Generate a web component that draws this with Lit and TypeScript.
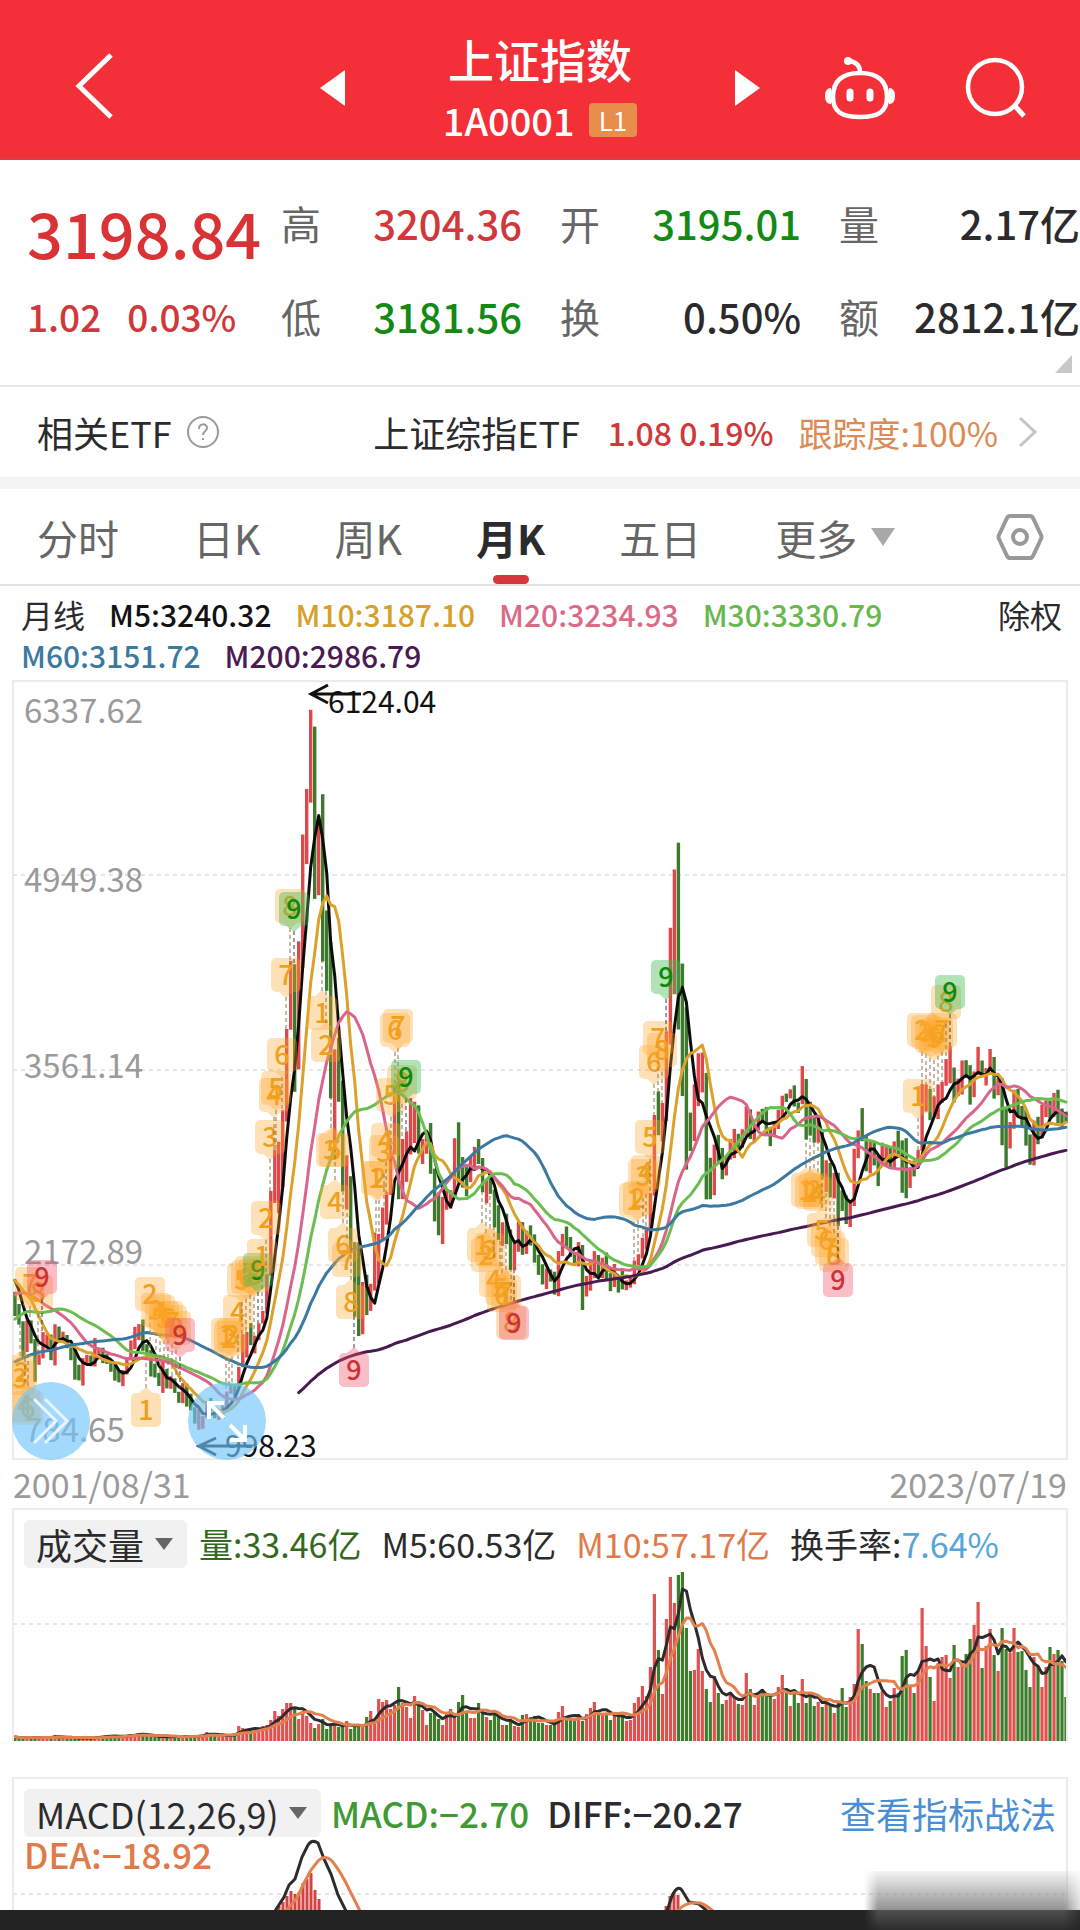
import { LitElement, html, svg, css } from "lit";
import { customElement } from "lit/decorators.js";

const nums = (s: string) => s.trim().split(/\s+/).map(Number);

// Monthly closes, December 1990 to July 2023.
const CLOSES = nums(`127.61
129.97 133.01 120.19 113.94 114.83 137.56 143.8 178.43 180.92 218.6 259.6 292.75
313.24 364.66 381.24 445.38 1234.71 1191.19 1052.07 823.27 702.32 507.25 724.6 780.39
1198.48 1339.88 925.91 1358.78 935.48 1007.05 881.07 895.68 890.27 814.82 984.93 833.8
770.25 770.98 704.46 592.56 556.26 469.29 333.92 785.33 791.15 654.98 683.59 647.87
562.59 549.26 646.92 579.93 700.51 630.58 695.55 723.87 722.43 717.32 641.14 555.29
537.35 552.94 556.39 681.16 643.65 804.25 822.48 809.94 875.53 976.71 1032.94 917.01
964.74 1040.27 1234.62 1393.75 1285.18 1250.27 1189.76 1221.06 1097.38 1180.39 1139.62 1194.1
1222.91 1206.53 1243.02 1343.44 1411.21 1339.2 1316.91 1150.22 1242.89 1217.31 1247.42 1146.7
1134.67 1090.08 1158.05 1120.93 1279.33 1689.43 1601.46 1627.12 1570.7 1504.56 1434.97 1366.58
1535 1714.58 1800.23 1836.32 1894.55 1928.11 2023.54 2021.2 1910.16 1961.29 2070.61 2073.48
2065.61 1959.18 2112.78 2119.18 2214.26 2218.03 1920.32 1834.14 1764.87 1689.17 1747.99 1645.97
1491.67 1524.7 1603.91 1667.75 1515.73 1732.76 1651.59 1666.62 1581.62 1507.5 1434.18 1357.65
1499.81 1511.93 1510.58 1521.44 1576.26 1486.02 1476.74 1421.98 1367.16 1348.3 1397.22 1497.04
1590.73 1675.07 1741.62 1595.59 1555.91 1399.16 1386.2 1342.06 1396.7 1320.54 1340.77 1266.5
1191.82 1306 1181.24 1159.15 1060.74 1080.94 1083.03 1162.8 1155.61 1092.82 1099.26 1161.06
1258.05 1299.03 1298.3 1440.22 1641.3 1672.21 1612.73 1658.64 1752.42 1837.99 2099.29 2675.47
2786.33 2881.07 3183.98 3841.27 4109.65 3820.7 4471.03 5218.83 5552.3 5954.77 4871.78 5261.56
4383.39 4348.54 3472.71 3693.11 3433.35 2736.1 2775.72 2397.37 2293.78 1728.79 1871.16 1820.81
1990.66 2082.85 2373.21 2477.57 2632.93 2959.36 3412.06 2667.75 2779.43 2995.85 3195.3 3277.14
2989.29 3051.94 3109.1 2870.61 2592.15 2398.37 2637.5 2638.8 2655.66 2978.83 2820.18 2808.08
2790.69 2905.05 2928.11 2911.51 2743.47 2762.08 2701.73 2567.34 2359.22 2468.25 2333.41 2199.42
2292.61 2428.49 2262.79 2396.32 2372.23 2225.43 2103.63 2047.52 2086.17 2068.88 1980.12 2269.13
2385.42 2365.59 2236.62 2177.91 2300.6 1979.21 1993.8 2098.38 2174.67 2141.61 2220.5 2115.98
2033.08 2056.3 2033.31 2026.36 2039.21 2048.33 2201.56 2217.2 2363.87 2420.18 2682.84 3234.68
3210.36 3310.3 3747.9 4441.66 4611.74 4277.22 3663.73 3205.99 3052.78 3382.56 3445.4 3539.18
2737.6 2687.98 3003.92 2938.32 2916.62 2929.61 2979.34 3085.49 3004.7 3100.49 3250.03 3103.64
3159.17 3241.73 3222.51 3154.66 3117.18 3192.43 3273.03 3360.81 3348.94 3393.34 3317.19 3307.17
3480.83 3259.41 3168.9 3082.23 3095.47 2847.42 2876.4 2725.25 2821.35 2602.78 2588.19 2493.9
2584.57 2940.95 3090.76 3078.34 2898.7 2978.88 2932.51 2886.24 2905.19 2929.06 2871.98 3050.12
2976.53 2880.3 2750.3 2860.08 2852.35 2984.67 3310.01 3395.68 3218.05 3224.53 3391.76 3473.07
3483.07 3509.08 3441.91 3446.86 3615.48 3591.2 3397.36 3543.94 3568.17 3547.34 3563.89 3639.78
3361.44 3462.31 3252.2 3047.06 3186.43 3398.62 3253.24 3202.14 3024.39 2893.48 3151.34 3089.26
3255.67 3279.61 3272.86 3323.27 3204.56 3202.06 3198.84`);

// High and low of each month, August 2001 onwards.
const RANGES = nums(`1980 1808 1893 1746 1770 1515 1776 1550 1776 1612
1643 1339 1535 1460 1693 1506 1675 1577 1675 1493 1749 1455 1733 1633 1696 1629 1672 1578 1585 1493 1573 1354 1460 1349
1507 1312 1530 1465 1526 1449 1650 1448 1583 1498 1582 1472 1536 1466 1494 1410 1456 1347 1418 1335 1422 1307 1512 1391
1634 1491 1730 1571 1750 1636 1783 1560 1607 1507 1565 1377 1468 1370 1403 1309 1496 1260 1431 1292 1379 1289 1363 1260
1268 1190 1330 1187 1326 1162 1254 1135 1158 1041 1146 998 1094 1004 1202 1080 1224 1133 1162 1080 1118 1067 1170 1074
1269 1161 1311 1255 1315 1239 1445 1297 1678 1443 1695 1512 1757 1600 1667 1541 1756 1635 1844 1754 2107 1826 2698 2095
2994 2612 3049 2541 3273 2724 3851 3192 4336 3846 4312 3404 4476 3564 5236 4285 5560 5025 6124 5463 6005 4778 5338 4804
5523 4331 4695 4123 4472 3357 3706 2991 3787 3333 3483 2694 2952 2566 2803 2284 2333 1802 2331 1665 2050 1678 2101 1814
2037 1844 2402 1988 2392 2038 2580 2354 2689 2458 2997 2670 3454 2958 3478 2639 3068 2640 3123 2763 3361 2959 3334 3039
3307 2963 3068 2890 3123 2963 3181 2820 2857 2481 2686 2382 2656 2320 2702 2564 2704 2573 3074 2656 3187 2758 2939 2722
2868 2661 2944 2761 3012 2850 3067 2890 2933 2689 2779 2610 2826 2677 2707 2437 2596 2348 2475 2307 2536 2319 2423 2134
2324 2132 2478 2265 2476 2243 2415 2250 2453 2310 2389 2188 2244 2100 2176 2032 2145 1999 2139 2053 2123 1960 2270 1949
2392 2234 2445 2290 2370 2228 2264 2165 2334 2161 2313 1850 2093 1946 2198 1988 2270 2078 2242 2094 2223 2078 2260 2068
2113 1984 2178 2014 2080 1974 2146 1997 2061 1991 2088 2010 2202 2034 2248 2168 2365 2217 2423 2280 2683 2401 3239 2665
3407 3095 3324 3049 3835 3198 4572 3742 4987 4099 5178 3848 4317 3374 4006 2850 3256 2983 3457 3053 3678 3302 3684 3400
3539 2638 2934 2639 3028 2668 3098 2905 3004 2781 2946 2808 3069 2922 3140 2932 3105 2969 3137 3005 3301 3094 3279 3069
3174 3044 3264 3132 3283 3193 3295 3098 3154 3017 3194 3082 3277 3139 3376 3201 3391 3332 3421 3357 3450 3300 3328 3254
3587 3315 3495 3063 3333 3092 3220 3042 3220 3042 3128 2782 2916 2691 2898 2653 2827 2645 2827 2449 2703 2556 2666 2463
2630 2441 2998 2591 3129 2931 3288 3052 3088 2838 3048 2823 3048 2880 2948 2733 3042 2880 3026 2879 3008 2858 3051 2858
3127 2956 3058 2685 3074 2647 2866 2720 2915 2802 2991 2872 3459 2985 3457 3263 3425 3202 3372 3220 3456 3210 3474 3326
3637 3447 3732 3465 3577 3329 3498 3373 3627 3385 3629 3503 3594 3313 3549 3366 3724 3526 3627 3510 3573 3449 3709 3559
3652 3356 3500 3380 3501 3024 3290 2864 3189 3000 3418 3140 3425 3227 3303 3156 3279 3021 3100 2885 3199 2880 3226 3031
3310 3073 3343 3224 3342 3216 3396 3226 3419 3180 3285 3144 3263 3183`);

// Monthly turnover, one unit per chart pixel.
const VOLUMES = nums(`4 3 3 4 3 3 3 4 4 3 6 4 3 3 3 3 3 3 3 3 4 5
5 5 5 5 4 5 6 7 7 8 6 5 4 4 4 5 4 4 5 5 4 4 5 5 6 6 9 8 5 4 5 6
7 8 15 13 12 11 12 13 15 16 21 30 25 32 38 38 33 22 30 25 18 13 17 22 12 17
17 14 16 20 12 14 15 16 24 30 22 42 39 41 32 36 54 38 34 23 45 40 31 16 28 29 22 16
28 32 24 39 46 30 23 23 38 28 24 21 26 25 16 16 20 15 14 26 27 24 25 18 18 16 16 17
29 35 22 22 20 27 20 27 33 39 30 27 27 21 26 26 25 20 21 38 44 55 45 74 147 91 47 122
164 138 166 169 113 70 71 92 70 52 39 65 48 37 41 49 44 37 36 68 52 36 46 52 46 46
42 54 66 50 35 48 38 62 38 46 35 39 34 38 36 28 38 53 34 44 57 112 97 60 52 48 48
50 34 40 53 48 85 91 56 48 70 133 95 64 40 78 84 86 63 96 74 76 87 102 116 139 73
95 112 86 70 113 92 88 113 89 90 71 54 84 75 54 74 94 87 91 80 44`);

const FIRST = 128;
const COUNT = CLOSES.length - FIRST;
const X0 = 15;
const STEP = (1066 - X0) / (COUNT - 1);
const r1 = (n: number) => Math.round(n * 10) / 10;
const px = (i: number) => r1(X0 + STEP * i);
const py = (v: number) => 1264.7 - (v - 2172.89) * 0.14043;
const rising = (i: number) => CLOSES[FIRST + i] >= CLOSES[FIRST + i - 1];

function average(data: number[], end: number, n: number): number | null {
  if (end - n + 1 < 0) return null;
  let s = 0;
  for (let k = end - n + 1; k <= end; k++) s += data[k];
  return s / n;
}

function priceLine(n: number): string {
  const pts: string[] = [];
  for (let i = 0; i < COUNT; i++) {
    const a = average(CLOSES, FIRST + i, n);
    if (a !== null) pts.push(`${px(i)},${r1(py(a))}`);
  }
  return pts.join(" ");
}

function volumeLine(n: number): string {
  return VOLUMES.map((_, i) => {
    const a = average(VOLUMES, i, Math.min(n, i + 1)) ?? 0;
    return `${px(i)},${r1(1742 - a)}`;
  }).join(" ");
}

type Tone = "o" | "g" | "r";
type Tag = [number, number, string, Tone, boolean];
const tagRow = (s: string, below: boolean): Tag[] =>
  s.trim().split(/\s+/).map((t) => {
    const [x, y, d, tone] = t.split(",");
    return [Number(x), Number(y), d, (tone ?? "o") as Tone, below];
  });

const TAGS: Tag[] = [
  ...tagRow("20,1378,3 22,1372,2 25,1405,4 28,1408,6", true),
  ...tagRow("30,1284,7 38,1292,8 42,1277,9,r", false),
  ...tagRow("146,1410,1", true),
  ...tagRow("150,1294,2 156,1310,3 160,1312,4 164,1318,5 168,1318,6 172,1322,7 176,1328,8 180,1335,9,r", false),
  ...tagRow("226,1335,1 229,1338,2 232,1335,3 238,1312,4 242,1280,5 246,1277,6 250,1273,7 254,1275,8 258,1270,9,g", false),
  ...tagRow("262,1256,1 266,1218,2 270,1137,3 274,1095,4 276,1088,5 282,1055,6 286,975,7 290,906,8 294,909,9,g", false),
  ...tagRow("322,1013,1 326,1045,2 331,1150,3 334,1150,5 335,1202,4 343,1245,6 347,1260,7 351,1302,8 354,1370,9,r", true),
  ...tagRow("376,1178,1 379,1178,2 384,1152,3 386,1140,4 391,1095,5 395,1030,6 398,1026,7 402,1082,8 406,1077,9,g", false),
  ...tagRow("482,1245,1 486,1255,2 490,1250,3 494,1280,4 500,1288,5 502,1295,6 506,1292,7 511,1322,8 514,1323,9,r", true),
  ...tagRow("634,1200,1 638,1198,2 643,1176,3 646,1172,4 650,1137,5 654,1062,6 658,1038,7 662,1050,8 666,977,9,g", false),
  ...tagRow("806,1190,1 810,1192,2 814,1190,3 818,1194,4 822,1230,5 826,1240,6 830,1248,7 834,1255,8 838,1280,9,r", true),
  ...tagRow("918,1096,1 922,1030,2 926,1032,3 930,1036,4 934,1038,5 938,1034,6 942,1030,7 946,1002,8 950,992,9,g", false),
];

const MACD_BARS = [
  [279, 1907], [283, 1903], [287, 1897], [291, 1892], [295, 1895], [299, 1893], [303, 1884], [307, 1880],
  [311, 1874], [315, 1891], [319, 1900], [666, 1907], [670, 1897], [674, 1893], [678, 1896],
];

@customElement("app-root")
export class AppRoot extends LitElement {
  static styles = css`
    :host {
      display: block;
      --red: #d0383b;
      --green: #138a13;
      --ink: #2b2b2d;
      --grey: #666;
      --font: "Noto Sans CJK SC", "Noto Sans", sans-serif;
      font-family: var(--font);
      color: var(--ink);
      background: #fff;
    }
    * { box-sizing: border-box; }
    svg { display: block; }
    button, select {
      font: inherit;
      color: inherit;
      background: none;
      border: 0;
      padding: 0;
      margin: 0;
      cursor: pointer;
    }
    a { text-decoration: none; }
    .page {
      position: relative;
      overflow: hidden;
    }
    header {
      display: grid;
      grid-template-columns: 1fr auto 1fr;
      align-items: center;
      height: 160px;
      padding: 18px 52px 0;
      background: #f32f38;
      color: #fff;
      border-bottom: 2px solid #d93f46;
    }
    .back { padding-left: 20px; }
    .switcher {
      display: flex;
      align-items: center;
      justify-content: space-between;
      width: 440px;
    }
    .title {
      display: flex;
      flex-direction: column;
      align-items: center;
    }
    h1 {
      margin: 0;
      font-size: 46px;
      line-height: 64px;
      font-weight: 500;
    }
    .code {
      display: flex;
      align-items: center;
      gap: 14px;
      font-size: 38px;
      font-weight: 500;
      line-height: 60px;
    }
    .level {
      background: #e88d4c;
      border-radius: 4px;
      padding: 0 10px;
      font-size: 26px;
      font-weight: 400;
      line-height: 34px;
    }
    .tools {
      display: flex;
      justify-content: flex-end;
      gap: 68px;
    }
    .quote {
      position: relative;
      display: grid;
      grid-template-columns: 254px 279fr 279fr 241fr;
      height: 227px;
      padding: 16px 0 18px 27px;
      grid-template-rows: 93px 93px;
      align-items: center;
      font-weight: 500;
      border-bottom: 2px solid #e6e6e6;
    }
    .price {
      font-size: 63px;
      line-height: 93px;
      font-weight: 500;
      color: #d93336;
      padding-top: 18px;
    }
    .change {
      display: flex;
      gap: 26px;
      font-size: 37px;
      color: var(--red);
    }
    .pair {
      display: flex;
      align-items: center;
      justify-content: space-between;
      font-size: 40px;
      padding-right: 38px;
      white-space: nowrap;
    }
    .pair:nth-child(4n) { padding-right: 0; }
    .pair .label { color: var(--grey); font-weight: 400; }
    .up { color: var(--red); }
    .down { color: var(--green); }
    .corner {
      position: absolute;
      right: 8px;
      bottom: 12px;
    }
    .etf {
      display: flex;
      align-items: center;
      justify-content: space-between;
      height: 90px;
      padding: 0 42px 0 37px;
      font-size: 36px;
      white-space: nowrap;
    }
    .etf button, .etf a {
      display: flex;
      align-items: center;
      color: inherit;
    }
    .etf button { gap: 14px; }
    .etf .figures { margin-left: 28px; font-size: 32px; font-weight: 500; color: var(--red); }
    .etf .track { margin: 0 20px 0 25px; font-size: 34px; color: #dd8a55; }
    .band { height: 12px; background: #f4f4f4; }
    .tabs {
      display: flex;
      align-items: stretch;
      gap: 74px;
      height: 97px;
      padding: 0 36px 0 37px;
      font-size: 41px;
      color: var(--grey);
      border-bottom: 2px solid #e4e4e4;
    }
    .tabs button {
      position: relative;
      display: flex;
      align-items: center;
      gap: 14px;
    }
    .tabs .on { color: var(--ink); font-weight: 700; }
    .tabs .on::after {
      content: "";
      position: absolute;
      left: 50%;
      bottom: 0;
      width: 36px;
      height: 9px;
      margin-left: -18px;
      border-radius: 5px;
      background: #d9363b;
    }
    .tabs .settings { margin-left: auto; }
    .legend {
      display: flex;
      justify-content: space-between;
      align-items: flex-start;
      padding: 8px 18px 4px 21px;
      font-size: 30px;
      font-weight: 500;
      line-height: 41px;
      white-space: nowrap;
    }
    .legend ul {
      display: flex;
      flex-wrap: wrap;
      column-gap: 24px;
      list-style: none;
      margin: 0;
      padding: 0;
      max-width: 900px;
    }
    .legend .cjk { font-size: 32px; font-weight: 400; }
    .m5 { color: #111; }
    .m10 { color: #d6a02a; }
    .m20 { color: #dc6a86; }
    .m30 { color: #67b84e; }
    .m60 { color: #3a7aa0; }
    .m200 { color: #4a1a52; }
    .chart {
      position: relative;
      margin: 0 12px;
    }
    .chart svg.plot, .pane svg.plot { width: 100%; height: auto; }
    .round {
      position: absolute;
      left: 0;
      bottom: 0;
      width: 78px;
      height: 78px;
      border-radius: 50%;
      background: rgba(112, 196, 252, 0.65);
    }
    .round.second { left: 176px; }
    .dates {
      display: flex;
      justify-content: space-between;
      padding: 0 13px;
      font-size: 34px;
      line-height: 48px;
      color: #9a9a9a;
    }
    .pane {
      display: grid;
      margin: 0 12px;
      border: 2px solid #ececec;
      border-bottom: 0;
    }
    .head {
      display: flex;
      align-items: center;
      gap: 20px;
      padding: 10px 10px 0;
      font-size: 34px;
      line-height: 48px;
      white-space: nowrap;
    }
    .chip {
      position: relative;
      display: flex;
      align-items: center;
      background: #f1f1f1;
      border-radius: 6px;
      font-size: 36px;
      font-weight: 400;
    }
    .chip select {
      appearance: none;
      height: 48px;
      padding: 0 42px 0 12px;
    }
    .chip svg {
      position: absolute;
      right: 14px;
      pointer-events: none;
    }
    .chip + * { margin-left: -8px; }
    .v-now { color: #33691e; }
    .v-avg { color: #e07a48; }
    .v-rate { color: #55a5d8; }
    .volume { margin-bottom: 36px; }
    .macd > * { grid-area: 1 / 1; }
    .macd .plot { align-self: end; }
    .macd-text { position: relative; }
    .macd-text .head { gap: 18px; font-size: 35px; font-weight: 500; }
    .macd-text a { margin-left: auto; color: #4a8fd6; font-size: 36px; font-weight: 400; }
    .v-macd { color: #3f9a34; }
    .dea {
      padding-left: 10px;
      font-size: 35px;
      font-weight: 500;
      line-height: 34px;
      color: #e07a48;
    }
    .foot { height: 20px; background: #232323; }
    .smudge {
      position: absolute;
      right: 0;
      bottom: 0;
      width: 216px;
      height: 59px;
      background: linear-gradient(rgba(150, 150, 150, 0.1), rgba(140, 140, 140, 0.95) 66%, #505050 66%, #2c2c2c);
      mask-image: linear-gradient(90deg, transparent, #000 14px, #000 200px, rgba(0, 0, 0, 0.3));
    }
    .t-axis { font-size: 33px; fill: #9a9a9a; font-family: var(--font); }
    .t-note { font-size: 30px; fill: #111; font-family: var(--font); }
    .t-tag { font-size: 27px; font-family: var(--font); font-weight: 500; text-anchor: middle; }
  `;

  private bars() {
    const out = [];
    for (let i = 0; i < COUNT; i++) {
      const top = py(RANGES[2 * i]);
      const bottom = py(RANGES[2 * i + 1]);
      out.push(svg`<rect x=${r1(px(i) - 1.7)} y=${r1(top)} width="3.4" height=${r1(bottom - top)}
        fill=${rising(i) ? "#e0474a" : "#3d7a2e"} />`);
    }
    return out;
  }

  private tag([x, y, d, tone, below]: Tag) {
    const fill = { o: "rgba(255,166,46,.34)", g: "rgba(70,186,86,.42)", r: "rgba(240,84,104,.38)" }[tone];
    const ink = { o: "#f0a01c", g: "#0b8a0b", r: "#cc3236" }[tone];
    const i = Math.max(0, Math.min(COUNT - 1, Math.round((x - X0) / STEP)));
    const end = below ? py(RANGES[2 * i + 1]) : py(RANGES[2 * i]);
    const start = below ? y - 22 : y + 22;
    const reach = below ? end < start : end > start;
    return svg`
      ${reach ? svg`<line x1=${x} x2=${x} y1=${start} y2=${r1(end)} stroke=${tone === "o" ? "#8d7448" : "#3a3a3a"}
        stroke-width="1" stroke-dasharray="4 3" />` : ""}
      <rect x=${x - 15} y=${y - 17} width="30" height="34" rx="5" fill=${fill} />
      <path d=${below ? `M${x - 7} ${y - 17}l7-6 7 6z` : `M${x - 7} ${y + 17}l7 6 7-6z`} fill=${fill} />
      <text class="t-tag" x=${x} y=${y + 10} fill=${ink}>${d}</text>`;
  }

  private line(points: string, color: string, width = 3) {
    return svg`<polyline points=${points} fill="none" stroke=${color} stroke-width=${width}
      stroke-linejoin="round" stroke-linecap="round" />`;
  }

  private grid(y: number) {
    return svg`<line x1="13" x2="1067" y1=${y} y2=${y} stroke="#e6e6e6" stroke-width="2" stroke-dasharray="4 4" />`;
  }

  private priceChart() {
    return html`<svg class="plot" viewBox="12 680 1056 780" role="img" aria-label="月K线图">
      <rect x="13" y="681" width="1054" height="778" fill="none" stroke="#ebebeb" stroke-width="2" />
      ${[875, 1070, 1265].map((y) => this.grid(y))}
      <g class="t-axis">
        <text x="24" y="723">6337.62</text>
        <text x="24" y="892">4949.38</text>
        <text x="24" y="1078">3561.14</text>
        <text x="24" y="1264">2172.89</text>
        <text x="24" y="1442">784.65</text>
      </g>
      ${this.bars()}
      ${this.line(priceLine(5), "#0c0c0c")}
      ${this.line(priceLine(10), "#dba12b")}
      ${this.line(priceLine(20), "#d9668a")}
      ${this.line(priceLine(30), "#6cbd50")}
      ${this.line(priceLine(60), "#3b79a2")}
      ${this.line(priceLine(200), "#471a50")}
      ${TAGS.map((t) => this.tag(t))}
      <path d="M361 694H311M328 685L311 694L328 703M252 1446H199M216 1438L199 1446L216 1455" fill="none"
        stroke="#111" stroke-width="3" />
      <text class="t-note" x="328" y="713">6124.04</text>
      <text class="t-note" x="225" y="1457">998.23</text>
    </svg>`;
  }

  private volumeChart() {
    return html`<svg class="plot" viewBox="14 1569 1052 173" role="img" aria-label="成交量图">
      ${this.grid(1625)}
      ${VOLUMES.map((v, i) => svg`<rect x=${r1(px(i) - 1.6)} y=${1742 - v} width="3.2" height=${v}
        fill=${rising(i) ? "#e0524f" : "#3f7d2c"} />`)}
      ${this.line(volumeLine(5), "#2c2c2c")}
      ${this.line(volumeLine(10), "#e2804e")}
    </svg>`;
  }

  private macdChart() {
    return html`<svg class="plot" viewBox="14 1780 1052 131" role="img" aria-label="MACD图">
      ${this.grid(1895)}
      ${MACD_BARS.map(([x, y]) => svg`<rect x=${x - 1.5} y=${y} width="3" height=${1911 - y} fill="#cf4340" />`)}
      <path d="M275 1912L284 1898L289 1886L295 1880L302 1858L308 1846Q312 1840 318 1844L324 1860L331 1875L338 1896L346 1912
        M667 1912L672 1897Q678 1884 683 1893L689 1903L699 1905L707 1912" fill="none" stroke="#2c2c2c" stroke-width="3" />
      <path d="M286 1912L297 1899L304 1884L311 1871L318 1862Q325 1855 332 1862Q341 1873 349 1890L360 1912
        M678 1912Q685 1902 700 1904Q706 1906 713 1912" fill="none" stroke="#e2804e" stroke-width="3" />
    </svg>`;
  }

  private caret() {
    return html`<svg width="18" height="12" viewBox="0 0 18 12" aria-hidden="true"><path d="M0 0H18L9 12z" fill="#666" /></svg>`;
  }

  render() {
    return html`<div class="page">
      <header>
        <div class="back">
          <button aria-label="返回">
            <svg width="44" height="68" viewBox="0 0 44 68" fill="none" stroke="#fff" stroke-width="5">
              <path d="M39 3L7 34L39 65" />
            </svg>
          </button>
        </div>
        <div class="switcher">
          <button aria-label="上一个">
            <svg width="25" height="36" viewBox="0 0 25 36"><path d="M25 0V36L0 18z" fill="#fff" /></svg>
          </button>
          <div class="title">
            <h1>上证指数</h1>
            <div class="code">1A0001 <span class="level">L1</span></div>
          </div>
          <button aria-label="下一个">
            <svg width="25" height="36" viewBox="0 0 25 36"><path d="M0 0V36L25 18z" fill="#fff" /></svg>
          </button>
        </div>
        <div class="tools">
          <button aria-label="智能助手">
            <svg width="72" height="66" viewBox="0 0 72 66" fill="none" stroke="#fff" stroke-width="4.5" stroke-linecap="round">
              <path d="M36 17C36 10 32 7 25 6" />
              <circle cx="24" cy="6" r="4" fill="#fff" stroke="none" />
              <path d="M36 18C54 18 63 26 63 42C63 57 54 62 36 62C18 62 9 57 9 42C9 26 18 18 36 18z" />
              <path d="M7 33C3 33 1 36 1 41C1 46 3 49 7 49zM65 33C69 33 71 36 71 41C71 46 69 49 65 49z" fill="#fff" stroke="none" />
              <path d="M26 37V43M46 37V43" stroke-width="7" />
            </svg>
          </button>
          <button aria-label="搜索">
            <svg width="64" height="66" viewBox="0 0 64 66" fill="none" stroke="#fff" stroke-width="4.5">
              <circle cx="31" cy="32" r="27" /><path d="M50 50L60 61" stroke-width="5" />
            </svg>
          </button>
        </div>
      </header>

      <section class="quote">
        <div class="price">3198.84</div>
        <div class="pair"><span class="label">高</span><span class="up">3204.36</span></div>
        <div class="pair"><span class="label">开</span><span class="down">3195.01</span></div>
        <div class="pair"><span class="label">量</span><span>2.17亿</span></div>
        <div class="change"><span>1.02</span><span>0.03%</span></div>
        <div class="pair"><span class="label">低</span><span class="down">3181.56</span></div>
        <div class="pair"><span class="label">换</span><span>0.50%</span></div>
        <div class="pair"><span class="label">额</span><span>2812.1亿</span></div>
        <svg class="corner" width="17" height="18" viewBox="0 0 17 18"><path d="M17 0V18H0z" fill="#c8c8c8" /></svg>
      </section>

      <section class="etf">
        <button>相关ETF
          <svg width="34" height="34" viewBox="0 0 34 34" fill="none" stroke="#999" stroke-width="2">
            <circle cx="17" cy="17" r="15" />
            <path d="M13 14C13 8 21 8 21 13C21 16 17 16 17 20M17 23V25" />
          </svg>
        </button>
        <a href="#etf">上证综指ETF
          <span class="figures">1.08 0.19%</span>
          <span class="track">跟踪度:100%</span>
          <svg width="20" height="32" viewBox="0 0 20 32" fill="none" stroke="#c4c4c4" stroke-width="3"><path d="M2 2L17 16L2 30" /></svg>
        </a>
      </section>
      <div class="band"></div>

      <nav class="tabs">
        <button>分时</button>
        <button>日K</button>
        <button>周K</button>
        <button class="on" aria-current="true">月K</button>
        <button>五日</button>
        <button aria-haspopup="menu">更多
          <svg width="24" height="18" viewBox="0 0 24 18"><path d="M0 0H24L12 18z" fill="#a8a8a8" /></svg>
        </button>
        <button class="settings" aria-label="设置">
          <svg width="48" height="48" viewBox="0 0 48 48" fill="none" stroke="#999" stroke-width="4">
            <path d="M14 3H34Q36 3 37 5L45 22Q46 24 45 26L37 43Q36 45 34 45H14Q12 45 11 43L3 26Q2 24 3 22L11 5Q12 3 14 3z" stroke-linejoin="round" />
            <circle cx="24" cy="24" r="7" />
          </svg>
        </button>
      </nav>

      <section class="legend">
        <ul>
          <li class="cjk">月线</li>
          <li class="m5">M5:3240.32</li>
          <li class="m10">M10:3187.10</li>
          <li class="m20">M20:3234.93</li>
          <li class="m30">M30:3330.79</li>
          <li class="m60">M60:3151.72</li>
          <li class="m200">M200:2986.79</li>
        </ul>
        <button class="cjk">除权</button>
      </section>

      <div class="chart">
        ${this.priceChart()}
        <button class="round" aria-label="展开">
          <svg width="78" height="78" viewBox="0 0 78 78" fill="none" stroke="#e8f5ff" stroke-width="3">
            <path d="M22 17L44 39L22 61M33 17L55 39L33 61" />
          </svg>
        </button>
        <button class="round second" aria-label="全屏">
          <svg width="78" height="78" viewBox="0 0 78 78" fill="none" stroke="#fff" stroke-width="4">
            <path d="M36 36L22 22M21 37V21H36M42 43L56 57M57 43V58H42" />
          </svg>
        </button>
      </div>
      <div class="dates"><span>2001/08/31</span><span>2023/07/19</span></div>

      <section class="pane volume">
        <div class="head">
          <label class="chip"><select aria-label="指标"><option>成交量</option></select>${this.caret()}</label>
          <span class="v-now">量:33.46亿</span>
          <span>M5:60.53亿</span>
          <span class="v-avg">M10:57.17亿</span>
          <span>换手率:<span class="v-rate">7.64%</span></span>
        </div>
        ${this.volumeChart()}
      </section>

      <section class="pane macd">
        ${this.macdChart()}
        <div class="macd-text">
          <div class="head">
            <label class="chip"><select aria-label="指标"><option>MACD(12,26,9)</option></select>${this.caret()}</label>
            <span class="v-macd">MACD:−2.70</span>
            <span>DIFF:−20.27</span>
            <a href="#guide">查看指标战法</a>
          </div>
          <div class="dea">DEA:−18.92</div>
        </div>
      </section>
      <div class="foot"></div>
      <div class="smudge"></div>
    </div>`;
  }
}
